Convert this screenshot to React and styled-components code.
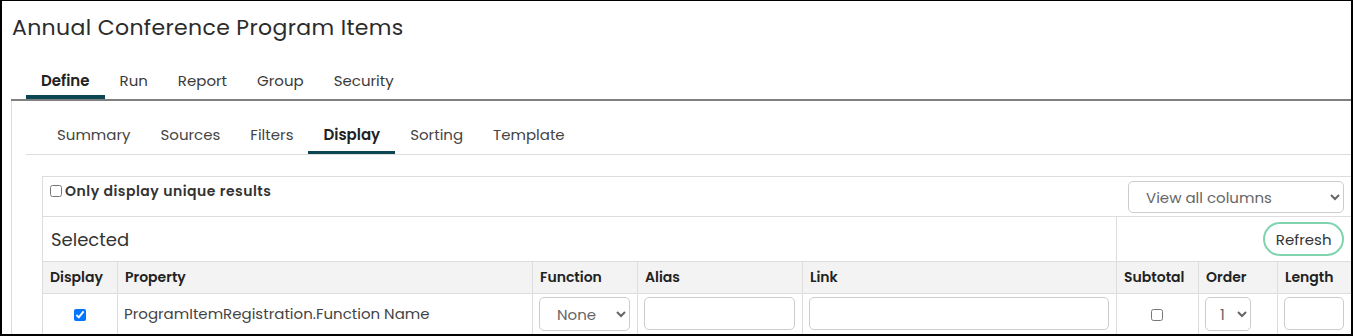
import React from "react";
import styled, { createGlobalStyle } from "styled-components";

const GlobalStyle = createGlobalStyle`
    html, body {
        margin: 0;
        padding: 0;
        background: #fff;
    }
    body {
        font-family: "Poppins", "Inter", "Noto Sans", sans-serif;
        color: #333;
    }
    * {
        box-sizing: border-box;
    }
`;

const Frame = styled.div`
    width: 1353px;
    height: 336px;
    border: 2px solid #000;
    border-top-width: 1px;
    overflow: hidden;
    padding-left: 9px;
    background: #fff;
`;

const Title = styled.h1`
    margin: 0;
    padding: 11px 0 0 1px;
    font-size: 22px;
    line-height: 32px;
    font-weight: 400;
    letter-spacing: 0.35px;
    color: #2b2b2b;
`;

const TopNav = styled.div`
    display: flex;
    margin-top: 16px;
    padding-left: 15px;
    border-bottom: 2px solid #808080;
`;

const TopTab = styled.div`
    padding: 10px 15px 3px;
    font-size: 15px;
    line-height: 22px;
    font-weight: ${props => (props.active ? 600 : 400)};
    color: ${props => (props.active ? "#222" : "#3a3a3a")};
    border-bottom: 4px solid ${props => (props.active ? "#0c4653" : "transparent")};
`;

const Panel = styled.div`
    border-left: 1px solid #dcdcdc;
    padding: 13px 0 0 14px;
    height: 240px;
`;

const SubNav = styled.div`
    display: flex;
    padding-left: 16px;
    border-bottom: 1px solid #dddddd;
`;

const SubTab = styled.div`
    padding: 10px 15px 5px;
    font-size: 15px;
    line-height: 22px;
    font-weight: ${props => (props.active ? 600 : 400)};
    color: ${props => (props.active ? "#222" : "#444")};
    border-bottom: 3px solid ${props => (props.active ? "#0c4653" : "transparent")};
`;

const Box = styled.table`
    margin: 21px 0 0 16px;
    width: 1309px;
    table-layout: fixed;
    border-collapse: collapse;
    border: 1px solid #dddddd;

    td, th {
        border: 1px solid #dddddd;
    }
`;

const OptionsCell = styled.td`
    padding: 4px 7px 3px 7px;
`;

const OptionsRow = styled.div`
    display: flex;
    justify-content: space-between;
    align-items: flex-start;
`;

const UniqueLabel = styled.label`
    display: flex;
    align-items: center;
    font-size: 14px;
    line-height: 20px;
    font-weight: 600;
    letter-spacing: 0.5px;
    color: #333;

    input {
        margin: 0 3px 0 0;
        width: 12px;
        height: 12px;
    }
`;

const Select = styled.select`
    height: ${props => props.h || 32}px;
    width: ${props => props.w}px;
    border: 1px solid #cccccc;
    border-radius: 5px;
    background: #fff;
    font-family: inherit;
    font-size: 15px;
    color: #666;
    padding: 0 6px 0 ${props => props.pl || 13}px;
`;

const CaptionCell = styled.td`
    height: 45px;
    padding: 0 8px;
    font-size: 18px;
    color: #333;
`;

const RefreshCell = styled.td`
    padding: 0 7px 0 0;
    text-align: right;
`;

const RefreshButton = styled.button`
    height: 34px;
    padding: 0 10.5px;
    border: 2px solid #7fd4ae;
    border-radius: 18px;
    background: #fff;
    font-family: inherit;
    font-size: 15px;
    color: #333;
`;

const HeadCell = styled.th`
    height: 32px;
    padding: 0 6px 0 7px;
    background: #f3f3f3;
    text-align: left;
    font-size: 14px;
    font-weight: 600;
    color: #222;
`;

const Cell = styled.td`
    height: 40px;
    padding: 3px 7px 3px 6px;
    font-size: 15px;
    color: #444;
    text-align: ${props => (props.center ? "center" : "left")};
    vertical-align: top;
    line-height: 33px;
`;

const TextInput = styled.input`
    display: block;
    width: 100%;
    height: 33px;
    border: 1px solid #cccccc;
    border-radius: 5px;
    background: #fff;
`;

const Check = styled.input`
    margin: 0;
    width: 12px;
    height: 12px;
    vertical-align: middle;
`;

const topTabs = ["Define", "Run", "Report", "Group", "Security"];
const subTabs = ["Summary", "Sources", "Filters", "Display", "Sorting", "Template"];
const columns = [
    { name: "Display", width: 75 },
    { name: "Property", width: 415 },
    { name: "Function", width: 105 },
    { name: "Alias", width: 165 },
    { name: "Link", width: 314 },
    { name: "Subtotal", width: 82 },
    { name: "Order", width: 79 },
    { name: "Length", width: 74 },
];

const App = () => (
    <>
        <GlobalStyle />
        <Frame>
            <Title>Annual Conference Program Items</Title>
            <TopNav>
                {topTabs.map(tab => (
                    <TopTab key={tab} active={tab === "Define"}>{tab}</TopTab>
                ))}
            </TopNav>
            <Panel>
                <SubNav>
                    {subTabs.map(tab => (
                        <SubTab key={tab} active={tab === "Display"}>{tab}</SubTab>
                    ))}
                </SubNav>
                <Box>
                    <colgroup>
                        {columns.map(col => <col key={col.name} style={{ width: col.width }} />)}
                    </colgroup>
                    <tbody>
                        <tr>
                            <OptionsCell colSpan={8}>
                                <OptionsRow>
                                    <UniqueLabel>
                                        <input type="checkbox" />
                                        Only display unique results
                                    </UniqueLabel>
                                    <Select w={216} defaultValue="all">
                                        <option value="all">View all columns</option>
                                        <option value="selected">View selected columns</option>
                                    </Select>
                                </OptionsRow>
                            </OptionsCell>
                        </tr>
                        <tr>
                            <CaptionCell colSpan={5}>Selected</CaptionCell>
                            <RefreshCell colSpan={3}>
                                <RefreshButton>Refresh</RefreshButton>
                            </RefreshCell>
                        </tr>
                        <tr>
                            {columns.map(col => <HeadCell key={col.name}>{col.name}</HeadCell>)}
                        </tr>
                        <tr>
                            <Cell center><Check type="checkbox" defaultChecked /></Cell>
                            <Cell>ProgramItemRegistration.Function Name</Cell>
                            <Cell>
                                <Select w={91} h={34} defaultValue="none">
                                    <option value="none">None</option>
                                    <option value="count">Count</option>
                                    <option value="sum">Sum</option>
                                </Select>
                            </Cell>
                            <Cell><TextInput type="text" /></Cell>
                            <Cell><TextInput type="text" /></Cell>
                            <Cell center><Check type="checkbox" /></Cell>
                            <Cell>
                                <Select w={46} h={34} pl={10} defaultValue="1">
                                    <option value="1">1</option>
                                    <option value="2">2</option>
                                </Select>
                            </Cell>
                            <Cell><TextInput type="text" /></Cell>
                        </tr>
                    </tbody>
                </Box>
            </Panel>
        </Frame>
    </>
);

export default App;
